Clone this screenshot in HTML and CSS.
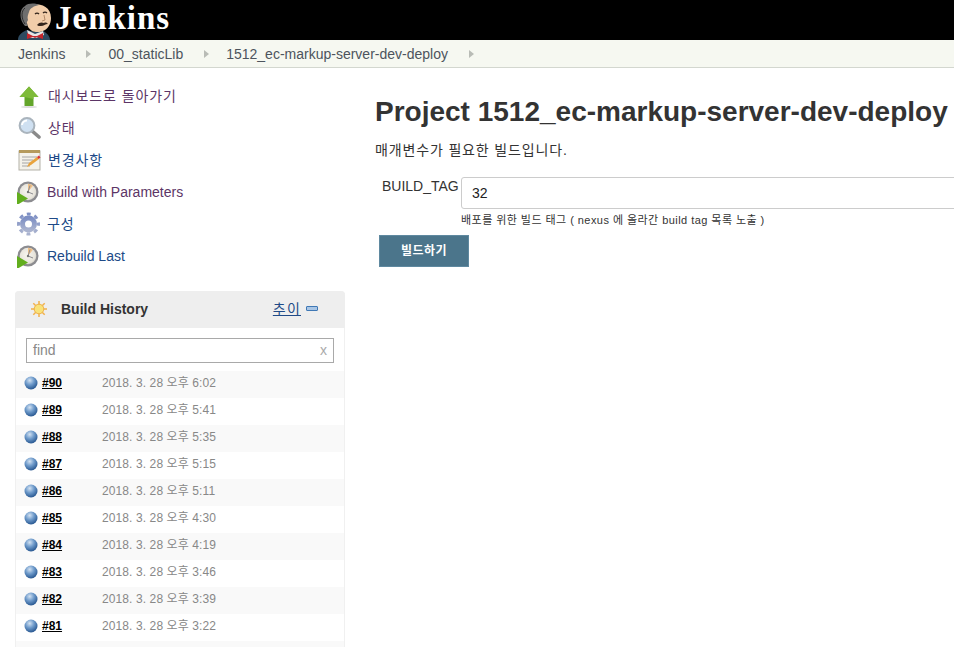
FILE: index.html
```html
<!DOCTYPE html>
<html lang="ko">
<head>
<meta charset="utf-8">
<title>Jenkins</title>
<link rel="stylesheet" href="styles.css">
</head>
<body>
<svg width="0" height="0" class="defs">
  <defs>
    <radialGradient id="ball" cx="40%" cy="30%" r="75%"><stop offset="0" stop-color="#d3e2f2"/><stop offset=".45" stop-color="#6f9bcb"/><stop offset="1" stop-color="#1f4f8a"/></radialGradient>
    <radialGradient id="clock" cx="45%" cy="45%" r="60%"><stop offset="0" stop-color="#f8f6f0"/><stop offset=".8" stop-color="#e6e3da"/><stop offset="1" stop-color="#c4c2bb"/></radialGradient>
    <linearGradient id="gear" x1="0" y1="0" x2="0" y2="1"><stop offset="0" stop-color="#7d8fc4"/><stop offset="1" stop-color="#aab3cf"/></linearGradient>
    <symbol id="bp" viewBox="0 0 24 24">
      <circle cx="11" cy="12" r="10.500" fill="#8c8c90"/>
      <circle cx="11" cy="12" r="8.300" fill="url(#clock)"/>
      <path d="M11 12V3.700A8.300 8.300 0 0 1 16 5.400Z" fill="#efc088"/>
      <path d="M11 12L13 5.500M11 12l5 2" stroke="#8c8c90" stroke-width="1" fill="none"/>
      <circle cx="11" cy="12" r="1.200" fill="#777"/>
      <path d="M0 12L11 18.500L0 25Z" fill="#62ae1e"/>
    </symbol>
  </defs>
</svg>
<header class="topbar">
  <div class="logo">
    <svg class="butler" width="38" height="40" viewBox="0 0 38 40">
      <path d="M2 40c0-5 4-8 9-10l8 2 8-1c4 2 7 5 7 9Z" fill="#2d4a60"/>
      <path d="M11 30l8 4 8-3 1 4-8 3H13Z" fill="#e6e6e6"/>
      <path d="M17 36l-6-3v6l6-2 2 1 2-1 6 2v-6l-6 3Z" fill="#c4252b"/>
      <path d="M7 18C4 9 11 4 18 4c8 0 17 3 17 14 0 6-3 10-6 12-3 2-9 3-13 1-3-2-5-5-5-8-2 0-4-2-4-5Z" fill="#f1cdaa"/>
      <path d="M9 26C3 20 3 9 9 6c3-3 10-3 14-1-5 1-9 3-10 7-1 3-2 5-1 8-1 2-2 3 0 6Z" fill="#6e6e6e"/>
      <path d="M9 24C5 18 5 11 9 8" stroke="#2c2c2c" fill="none"/>
      <path d="M19 14c1-1 3-1 4 0M27 13c1-1 3-1 4 0" stroke="#33251c" stroke-width="1.300" fill="none"/>
      <path d="M21 25c2-3 5-3 7-2 2-1 3 0 4 1-3 0-4 2-7 2-2 0-3 0-4-1Z" fill="#33251c"/>
      <path d="M28 15l1 5-3 1" stroke="#b48a68" fill="none"/>
    </svg>
    <span class="wordmark">Jenkins</span>
  </div>
</header>
<nav class="crumbs">
  <a>Jenkins</a><span class="sep"></span>
  <a>00_staticLib</a><span class="sep"></span>
  <a>1512_ec-markup-server-dev-deploy</a><span class="sep"></span>
</nav>
<div class="page">
  <aside class="side">
    <ul class="tasks">
      <li><svg class="ic" viewBox="0 0 24 24"><ellipse cx="12" cy="23" rx="8" ry="1" fill="#ddd"/><path d="M12 2.500L21.500 13H16.500V22H7.500V13H2.500Z" fill="#63a52a"/><path d="M12 2.500L21.500 13H16.500V15L7.500 13H2.500Z" fill="#7fbb3a"/></svg><a class="visited ko">대시보드로 돌아가기</a></li>
      <li><svg class="ic" viewBox="0 0 24 24"><path d="M14 14l8 7" stroke="#8a8a8a" stroke-width="3.600" stroke-linecap="round"/><circle cx="10" cy="9.500" r="7.400" fill="#cfe0f1" stroke="#aab4bd" stroke-width="2"/><path d="M5 9a5 5 0 0 1 5-4.500" stroke="#fff" stroke-width="2" fill="none"/></svg><a class="visited ko">상태</a></li>
      <li><svg class="ic" viewBox="0 0 24 24"><rect x="2" y="3" width="21" height="19" fill="#f4f2ea" stroke="#b4b1a7"/><rect x="2" y="2" width="21" height="3" fill="#b59a5c"/><path d="M5 9h15M5 12h11M5 15h8M5 18h8" stroke="#a6a6a6"/><path d="M10 19l2-4 8-6 2 2-8 6Z" fill="#e9a33c"/><path d="M20 9l2-1.500 1.500 2-2 1.500Z" fill="#d33"/></svg><a class="ko">변경사항</a></li>
      <li><svg class="ic"><use href="#bp"/></svg><a class="visited">Build with Parameters</a></li>
      <li><svg class="ic" viewBox="0 0 24 24"><circle cx="11.500" cy="12" r="10" fill="none" stroke="url(#gear)" stroke-width="3" stroke-dasharray="3.900 3.950" stroke-dashoffset="2"/><circle cx="11.500" cy="12" r="6" fill="none" stroke="url(#gear)" stroke-width="5"/></svg><a class="ko tight">구성</a></li>
      <li><svg class="ic"><use href="#bp"/></svg><a>Rebuild Last</a></li>
    </ul>
    <section class="history">
      <div class="hist-head">
        <svg class="sun" viewBox="0 0 16 16"><g stroke="#f2b04a" stroke-width="1.500"><path d="M8 0v16M0 8h16M2.300 2.300l11.400 11.400M13.700 2.300L2.300 13.700"/></g><circle cx="8" cy="8" r="4.800" fill="#f9e27a" stroke="#eeb24a"/></svg>
        <span class="hist-title">Build History</span>
        <a class="trend">추이</a>
        <span class="collapse"></span>
      </div>
      <div class="search"><span class="find">find</span><span class="clear">x</span></div>
      <ul class="builds">
        <li><svg class="ball" viewBox="0 0 16 16"><circle cx="8" cy="8" r="6.500" fill="url(#ball)"/></svg><a>#90</a><span class="date">2018. 3. 28 오후 6:02</span></li>
        <li><svg class="ball" viewBox="0 0 16 16"><circle cx="8" cy="8" r="6.500" fill="url(#ball)"/></svg><a>#89</a><span class="date">2018. 3. 28 오후 5:41</span></li>
        <li><svg class="ball" viewBox="0 0 16 16"><circle cx="8" cy="8" r="6.500" fill="url(#ball)"/></svg><a>#88</a><span class="date">2018. 3. 28 오후 5:35</span></li>
        <li><svg class="ball" viewBox="0 0 16 16"><circle cx="8" cy="8" r="6.500" fill="url(#ball)"/></svg><a>#87</a><span class="date">2018. 3. 28 오후 5:15</span></li>
        <li><svg class="ball" viewBox="0 0 16 16"><circle cx="8" cy="8" r="6.500" fill="url(#ball)"/></svg><a>#86</a><span class="date">2018. 3. 28 오후 5:11</span></li>
        <li><svg class="ball" viewBox="0 0 16 16"><circle cx="8" cy="8" r="6.500" fill="url(#ball)"/></svg><a>#85</a><span class="date">2018. 3. 28 오후 4:30</span></li>
        <li><svg class="ball" viewBox="0 0 16 16"><circle cx="8" cy="8" r="6.500" fill="url(#ball)"/></svg><a>#84</a><span class="date">2018. 3. 28 오후 4:19</span></li>
        <li><svg class="ball" viewBox="0 0 16 16"><circle cx="8" cy="8" r="6.500" fill="url(#ball)"/></svg><a>#83</a><span class="date">2018. 3. 28 오후 3:46</span></li>
        <li><svg class="ball" viewBox="0 0 16 16"><circle cx="8" cy="8" r="6.500" fill="url(#ball)"/></svg><a>#82</a><span class="date">2018. 3. 28 오후 3:39</span></li>
        <li><svg class="ball" viewBox="0 0 16 16"><circle cx="8" cy="8" r="6.500" fill="url(#ball)"/></svg><a>#81</a><span class="date">2018. 3. 28 오후 3:22</span></li>
        <li></li>
      </ul>
    </section>
  </aside>
  <main class="main">
    <h1>Project 1512_ec-markup-server-dev-deploy</h1>
    <p class="lead">매개변수가 필요한 빌드입니다.</p>
    <div class="param">
      <label>BUILD_TAG</label>
      <div class="field">
        <div class="input">32</div>
        <div class="hint">배포를 위한 빌드 태그 ( nexus 에 올라간 build tag 목록 노출 )</div>
      </div>
    </div>
    <div class="btn">빌드하기</div>
  </main>
</div>
</body>
</html>
```
FILE: styles.css
```css
* { box-sizing: border-box; }
html, body { margin: 0; padding: 0; height: 647px; overflow: hidden; }
body { background: #fff; color: #333; font: 14px/20px "Liberation Sans", "Noto Sans CJK KR", sans-serif; }
ul { list-style: none; margin: 0; padding: 0; }
.defs { display: block; height: 0; }

.topbar { height: 40px; background: #000; overflow: hidden; }
.logo { display: flex; align-items: center; height: 40px; padding-left: 16px; }
.butler { flex: none; }
.wordmark { margin-left: 1px; margin-top: -4px; color: #fff; font: bold 33px/36px "Liberation Serif", serif; letter-spacing: 1px; }

.crumbs { display: flex; align-items: center; height: 28px; padding-left: 18px; background: #f6f8f1; border-bottom: 1px solid #d3d7cf; color: #4d545d; }
.sep { width: 0; height: 0; margin: 0 17px 0 21px; border-left: 5px solid #b9bcb6; border-top: 4px solid transparent; border-bottom: 4px solid transparent; }

.page { display: flex; align-items: flex-start; }
.side { flex: none; width: 360px; padding: 12px 15px 0; }
.tasks li { display: flex; align-items: center; height: 32px; padding-left: 2px; }
.ic { flex: none; width: 24px; height: 24px; margin-right: 6px; }
.tasks a { color: #204a87; }
.tasks a.visited { color: #5c3566; }
.tasks a.ko { margin-left: 1px; letter-spacing: .9px; }
.tasks a.tight { margin-left: 0; }

.history { margin-top: 19px; width: 330px; border: 1px solid #f0f0f0; border-radius: 4px 4px 0 0; }
.hist-head { display: flex; align-items: center; height: 37px; margin: -1px -1px 0; padding: 0 27px 2px 16px; background: #eee; border-radius: 4px 4px 0 0; }
.sun { flex: none; width: 16px; height: 16px; }
.hist-title { flex: 1; margin-left: 14px; font-weight: bold; color: #333; }
.trend { color: #204a87; letter-spacing: 1.200px; text-decoration: underline; }
.collapse { width: 12px; height: 5px; margin-left: 5px; background: #a9c6e6; border: 1px solid #3f78b5; border-radius: 1px; }
.search { display: flex; justify-content: space-between; align-items: center; height: 25px; margin: 10px 10px 8px; padding: 0 6px 2px; border: 1px solid #a9a9a9; color: #888; }
.clear { color: #aaa; }
.builds li { display: flex; align-items: center; height: 27px; padding: 0 0 4px 7px; }
.builds li:nth-child(odd) { background: #f9f9f9; }
.ball { flex: none; width: 16px; height: 16px; margin-right: 3px; }
.builds a { width: 60px; color: #000; font-size: 12px; font-weight: bold; text-decoration: underline; }
.date { color: #888; font-size: 12px; letter-spacing: .1px; }

.main { flex: none; width: 600px; padding: 26px 0 0 15px; }
h1 { margin: 0; color: #333; font-size: 28px; line-height: 36px; white-space: nowrap; }
.lead { margin: 10px 0 0; line-height: 20px; letter-spacing: .85px; }
.param { display: flex; align-items: flex-start; margin-top: 17px; }
label { flex: none; width: 86px; margin-top: -1px; padding: 0 2px 0 7px; text-align: left; }
.field { flex: none; width: 600px; }
.input { height: 32px; padding-left: 10px; border: 1px solid #ccc; border-radius: 3px; color: #222; line-height: 30px; }
.hint { margin-top: 1px; font-size: 11px; line-height: 20px; color: #333; letter-spacing: .45px; }
.btn { width: 90px; height: 32px; margin: 5px 0 0 4px; background: #4b758b; color: #fff; font-size: 12px; font-weight: bold; line-height: 30px; letter-spacing: .5px; text-align: center; border: 1px solid #5f89a0; }
```
